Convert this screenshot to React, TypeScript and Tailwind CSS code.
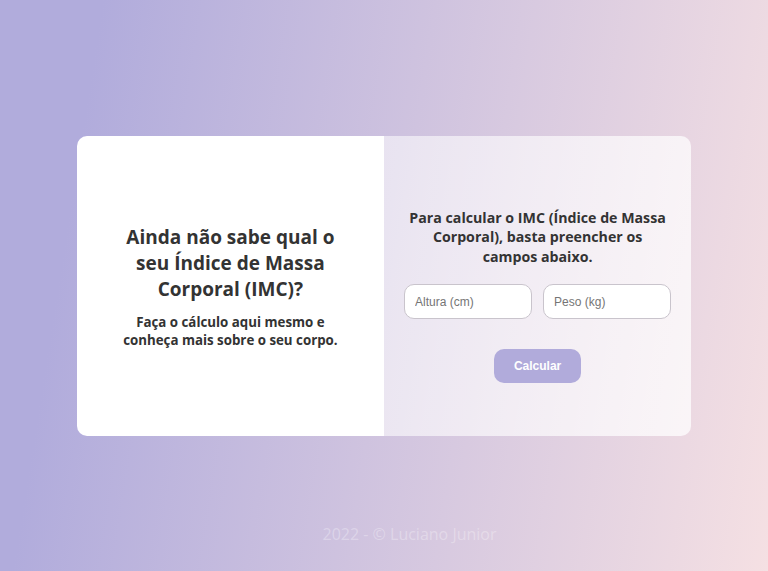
const App = () => {
  return (
    <div
      className="grid h-screen grid-rows-[1fr_auto_1fr] bg-[linear-gradient(99deg,#b1acdc_12%,#f5e0e3_100%)] text-[#333]"
      style={{ fontFamily: '"Open Sans", sans-serif' }}
    >
      <div />
      <main className="mx-auto flex h-[300px] w-[80%] overflow-hidden rounded-[10px]">
        <section className="flex w-1/2 flex-col items-center justify-center bg-white px-10 pt-[2px] text-center">
          <h1 className="text-[19px] font-bold leading-[26px]">
            Ainda não sabe qual o seu Índice de Massa Corporal (IMC)?
          </h1>
          <p className="mt-[11px] text-[13.3px] font-bold leading-[18px]">
            Faça o cálculo aqui mesmo e conheça mais sobre o seu corpo.
          </p>
        </section>
        <section className="flex w-1/2 flex-col items-center justify-center bg-[linear-gradient(100deg,rgba(255,255,255,0.55),rgba(255,255,255,0.75))] px-5 pt-[20px] text-center">
          <p className="px-[2px] text-[14.2px] font-bold leading-[19.5px]">
            Para calcular o IMC (Índice de Massa Corporal), basta preencher os
            campos abaixo.
          </p>
          <form
            className="mt-[18px] flex w-full flex-col items-center"
            onSubmit={(e) => e.preventDefault()}
          >
            <div className="flex w-full gap-[11px]">
              <input
                type="number"
                placeholder="Altura (cm)"
                className="h-[35px] w-1/2 rounded-[10px] border border-[#c9c4cc] bg-white px-[10px] text-[12px] outline-none placeholder:text-[#757575]"
                style={{ fontFamily: '"Liberation Sans", Arial, sans-serif' }}
              />
              <input
                type="number"
                placeholder="Peso (kg)"
                className="h-[35px] w-1/2 rounded-[10px] border border-[#c9c4cc] bg-white px-[10px] text-[12px] outline-none placeholder:text-[#757575]"
                style={{ fontFamily: '"Liberation Sans", Arial, sans-serif' }}
              />
            </div>
            <button
              type="submit"
              className="mt-[30px] h-[34px] w-[87px] rounded-[10px] bg-[#b1abdb] text-[12px] font-bold text-white"
              style={{ fontFamily: '"Liberation Sans", Arial, sans-serif' }}
            >
              Calcular
            </button>
          </form>
        </section>
      </main>
      <footer className="self-end pb-[25px] pl-[51px] text-center text-[16px] leading-6 text-white/30">
        2022 - © Luciano Junior
      </footer>
    </div>
  );
};
export default App;
